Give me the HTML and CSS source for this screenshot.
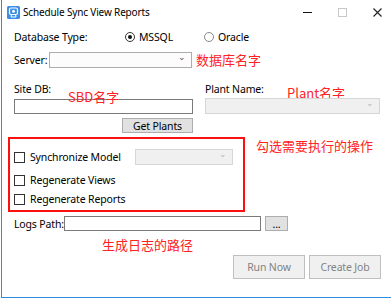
FILE: index.html
```html
<!DOCTYPE html>
<html lang="en">
<head>
  <meta charset="UTF-8">
  <title>Schedule Sync View Reports</title>
  <link rel="stylesheet" href="styles.css">
</head>
<body>

<div class="window">
  <div class="titlebar">
    <svg class="app-icon" width="13" height="13" viewBox="0 0 13 13">
      <rect x="0" y="0" width="13" height="13" rx="1.5" fill="#3a8ee6"/>
      <rect x="2.5" y="2" width="8" height="6.5" rx="1.5" fill="none" stroke="#fff" stroke-width="1.2"/>
      <circle cx="6.5" cy="5.2" r="1.5" fill="#fff"/>
      <path d="M4.5 8.5 L4 11 L9 11 L8.5 8.5" fill="none" stroke="#fff" stroke-width="1"/>
    </svg>
    <span class="title">Schedule Sync View Reports</span>
    <div class="controls">
      <svg class="ctl" width="35" height="22" viewBox="0 0 35 22"><path d="M13 11.5 H22" stroke="#111" stroke-width="1"/></svg>
      <svg class="ctl" width="35" height="22" viewBox="0 0 35 22"><rect x="13.5" y="7.5" width="8" height="8" fill="none" stroke="#c8c8c8" stroke-width="1"/></svg>
      <svg class="ctl" width="35" height="22" viewBox="0 0 35 22"><path d="M13.5 7.5 L21.5 15.5 M21.5 7.5 L13.5 15.5" stroke="#222" stroke-width="1.1"/></svg>
    </div>
  </div>

  <div class="form">
    <div class="row db-type">
      <span class="label type-label">Database Type:</span>
      <label class="radio"><span class="dot checked"></span>MSSQL</label>
      <label class="radio oracle"><span class="dot"></span>Oracle</label>
    </div>

    <div class="row server-row">
      <span class="label server-label">Server:</span>
      <div class="combo server-combo"><span class="arrow">&#8964;</span></div>
      <span class="hint server-hint">数据库名字</span>
    </div>

    <div class="site-plant">
      <div class="col site-col">
        <span class="label">Site DB:</span>
        <span class="hint sbd-hint">SBD名字</span>
        <div class="textbox site-box"></div>
        <div class="get-row">
          <button class="btn get-btn">Get Plants</button>
        </div>
      </div>
      <div class="col plant-col">
        <span class="label">Plant Name:</span>
        <span class="hint plant-hint">Plant名字</span>
        <div class="combo disabled plant-combo"><span class="arrow">&#8964;</span></div>
      </div>
    </div>

    <div class="options">
      <div class="opt opt-sync">
        <span class="check"></span>
        <span class="label opt-label">Synchronize Model</span>
        <div class="combo disabled model-combo"><span class="arrow">&#8964;</span></div>
        <span class="hint ops-hint">勾选需要执行的操作</span>
      </div>
      <div class="opt opt-views">
        <span class="check"></span>
        <span class="label">Regenerate Views</span>
      </div>
      <div class="opt opt-reports">
        <span class="check"></span>
        <span class="label">Regenerate Reports</span>
      </div>
    </div>

    <div class="row logs-row">
      <span class="label logs-label">Logs Path:</span>
      <div class="textbox logs-box"></div>
      <button class="btn dots-btn">...</button>
    </div>
    <div class="hint logs-hint">生成日志的路径</div>

    <div class="actions">
      <button class="btn off">Run Now</button>
      <button class="btn off">Create Job</button>
    </div>
  </div>
</div>

</body>
</html>
```

FILE: styles.css
```css
* { box-sizing: border-box; margin: 0; padding: 0; }
body {
  background: #fff;
  font-family: "Noto Sans", "Noto Sans CJK SC", sans-serif;
  font-size: 10.5px;
  letter-spacing: -0.15px;
  color: #000;
}

.window {
  margin-left: 1px;
  width: 390px;
  height: 298px;
  border-left: 1px solid #2b8de0;
  border-bottom: 1px solid #2b8de0;
  background: #fff;
}

/* title bar */
.titlebar {
  height: 23px;
  display: flex;
  align-items: center;
  position: relative;
}
.app-icon { margin-left: 5px; margin-top: 2px; }
.title {
  margin-left: 3px;
  font-size: 10px;
  margin-top: 1px;
}
.controls {
  margin-left: auto;
  display: flex;
  margin-right: -4px;
}

.form { padding: 6px 0 0 12px; }

.row {
  display: flex;
  align-items: center;
  height: 16px;
}
.label { white-space: nowrap; line-height: 14px; }

.hint {
  color: #ff2222;
  font-family: "Noto Sans CJK SC", sans-serif;
  font-size: 13px;
  line-height: 14px;
  letter-spacing: 0;
  white-space: nowrap;
}

/* database type */
.type-label { width: 111px; }
.radio { display: flex; align-items: center; }
.radio .dot {
  width: 10px;
  height: 10px;
  border: 1px solid #333;
  border-radius: 50%;
  margin-right: 4px;
  position: relative;
}
.radio .dot.checked::after {
  content: "";
  position: absolute;
  left: 2px; top: 2px;
  width: 4px; height: 4px;
  border-radius: 50%;
  background: #111;
}
.radio.oracle { margin-left: 31px; }
.radio.oracle .dot { border-color: #888; }

/* server */
.server-row { margin-top: 7px; }
.server-label { width: 35px; }

.combo {
  height: 16px;
  border: 1px solid #adadad;
  background: #fcfcfc;
  position: relative;
}
.combo .arrow {
  position: absolute;
  right: 5px;
  top: -3px;
  font-size: 9px;
  color: #555;
}
.combo.disabled {
  background: #f0f0f0;
  border-color: #d6d6d6;
}
.combo.disabled .arrow { color: #b5b5b5; }
.server-combo { width: 143px; }
.server-hint { margin-left: 4px; }

/* site / plant */
.site-plant {
  display: flex;
  gap: 12px;
  margin-top: 14px;
}
.col { position: relative; display: flex; flex-direction: column; }
.site-col { width: 179px; }
.plant-col { width: 175px; }
.col .label { height: 16px; }
.sbd-hint { position: absolute; left: 54px; top: 8px; }
.plant-hint { position: absolute; left: 82px; top: 4px; }

.textbox {
  height: 15px;
  border: 1px solid #7a7a7a;
  background: #fff;
}
.site-box { margin-top: 1px; }

.get-row { display: flex; justify-content: flex-end; margin-top: 4px; }

.btn {
  font-family: inherit;
  font-size: 10.5px;
  letter-spacing: inherit;
  color: #000;
  background: #e1e1e1;
  border: 1px solid #adadad;
  height: 15px;
  line-height: 12px;
}
.get-btn { width: 71px; }

/* option box */
.options {
  margin: 4px 0 0 -6px;
  width: 237px;
  height: 75px;
  border: 2px solid #ff1010;
  padding: 10px 0 0 4px;
  position: relative;
}
.opt { display: flex; align-items: center; height: 16px; }
.opt-views { margin-top: 7px; }
.opt-reports { margin-top: 3px; }
.check {
  width: 11px;
  height: 11px;
  border: 1px solid #333;
  background: #fff;
  margin-right: 5px;
}
.opt-label { width: 105px; }
.model-combo { width: 98px; }
.ops-hint { position: absolute; left: 236px; top: 0; margin-left: 10px; }

/* logs */
.logs-row { margin-top: 4px; height: 15px; }
.logs-label { width: 50px; }
.logs-box { width: 197px; }
.dots-btn { width: 23px; margin-left: 4px; line-height: 8px; }
.logs-hint { margin: 6px 0 0 88px; line-height: 15px; }

.actions {
  display: flex;
  gap: 4px;
  margin: 3px 0 0 219px;
}
.actions .btn { height: 24px; width: 72px; }
.btn.off {
  background: #f0f0f0;
  border-color: #bfbfbf;
  color: #838383;
}
```
